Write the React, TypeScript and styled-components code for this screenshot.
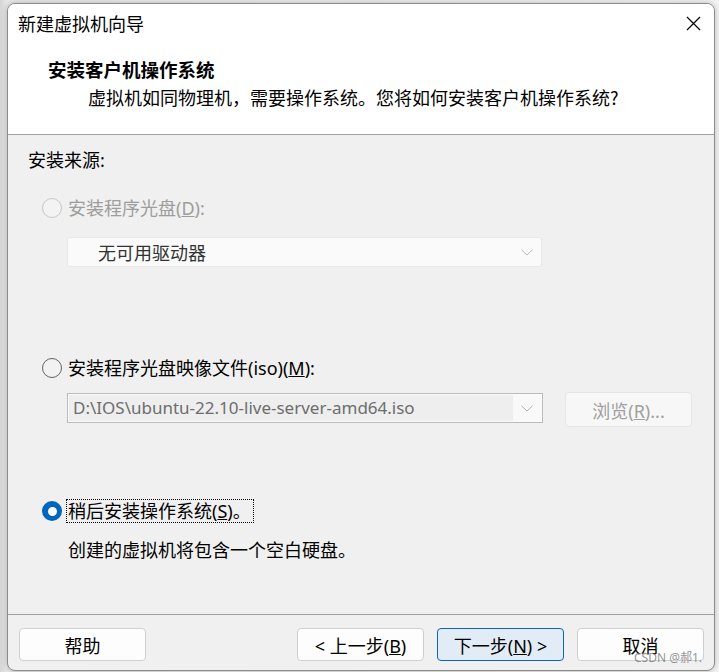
import React from "react";
import styled, { createGlobalStyle, css } from "styled-components";

const Global = createGlobalStyle`
  html, body { margin: 0; padding: 0; }
  body {
    background: #e6e6e6;
    font-family: "Noto Sans", "Noto Sans CJK SC", sans-serif;
    overflow: hidden;
  }
  * { box-sizing: border-box; }
`;

const Page = styled.div`
  width: 719px;
  height: 672px;
  padding: 3px 4px 0 7px;
  background: linear-gradient(90deg, #d4d4d4 0px, #e9e9e9 7px, #f4f4f4 100%);
`;

const Window = styled.div`
  width: 708px;
  height: 668px;
  border: 1px solid #8c8c8c;
  border-radius: 8px;
  overflow: hidden;
  background: #f0f0f0;
  box-shadow: 0 0 6px rgba(0, 0, 0, 0.25);
  display: flex;
  flex-direction: column;
`;

const TitleBar = styled.div`
  height: 38px;
  flex: none;
  background: #ffffff;
  display: flex;
  align-items: center;
  justify-content: space-between;
  padding: 0 13px 0 10px;
`;

const TitleText = styled.span`
  font-family: "Noto Sans CJK SC", sans-serif;
  font-size: 18px;
  line-height: 24px;
  color: #000;
`;

const CloseButton = styled.button`
  width: 16px;
  height: 16px;
  padding: 0;
  border: none;
  background: transparent;
  display: flex;
  align-items: center;
  justify-content: center;
`;

const Header = styled.div`
  height: 93px;
  flex: none;
  background: #ffffff;
  border-bottom: 1px solid #a0a0a0;
  padding: 15px 0 0 40px;
  display: flex;
  flex-direction: column;
  gap: 4px;
`;

const Heading = styled.div`
  font-family: "Noto Sans CJK SC", sans-serif;
  font-weight: 700;
  font-size: 18.5px;
  line-height: 24px;
  color: #000;
`;

const SubHeading = styled.div`
  font-family: "Noto Sans CJK SC", sans-serif;
  font-size: 18px;
  line-height: 24px;
  color: #000;
  padding-left: 40px;
`;

const Content = styled.div`
  height: 480px;
  flex: none;
  border-bottom: 1px solid #a0a0a0;
  padding: 13px 0 0 20px;
  display: flex;
  flex-direction: column;
  align-items: flex-start;
`;

const SectionLabel = styled.div`
  font-size: 18px;
  line-height: 24px;
  color: #000;
`;

const RadioRow = styled.div<{ $mt: number }>`
  display: flex;
  align-items: center;
  height: 24px;
  margin-top: ${(p) => p.$mt}px;
  margin-left: 14px;
  gap: 4px;
`;

type RadioState = "disabled" | "off" | "on";

const RadioCircle = styled.span<{ $state: RadioState }>`
  width: 20px;
  height: 20px;
  border-radius: 50%;
  flex: none;
  display: flex;
  align-items: center;
  justify-content: center;
  ${(p) =>
    p.$state === "disabled"
      ? css`
          border: 1px solid #c6c6c6;
          background: #f3f3f3;
        `
      : p.$state === "off"
      ? css`
          border: 1px solid #616161;
          background: #f2f2f2;
        `
      : css`
          background: #0067c0;
        `}
`;

const RadioDot = styled.span`
  width: 9px;
  height: 9px;
  border-radius: 50%;
  background: #ffffff;
`;

const RadioLabel = styled.span<{ $disabled?: boolean; $focused?: boolean }>`
  font-size: 18px;
  line-height: 22px;
  height: 24px;
  padding: 0 2px 0 1px;
  border: 1px dotted ${(p) => (p.$focused ? "#000" : "transparent")};
  color: ${(p) => (p.$disabled ? "#9d9d9d" : "#000")};
  white-space: nowrap;
`;

const DisabledSelect = styled.div`
  margin: 17px 0 0 39px;
  width: 475px;
  height: 30px;
  background: #fafafa;
  border: 1px solid #e8e8e8;
  border-radius: 2px;
  display: flex;
  align-items: center;
  justify-content: space-between;
  padding: 0 8px 0 30px;
  font-size: 18px;
  color: #333333;
`;

const FileRow = styled.div`
  margin: 12px 0 0 39px;
  display: flex;
  align-items: flex-start;
  gap: 22px;
`;

const Combo = styled.div`
  margin-top: 1px;
  width: 476px;
  height: 30px;
  border: 1px solid #bcbcbc;
  background: #f9f9f9;
  display: flex;
  align-items: stretch;
  padding: 1px;
`;

const ComboText = styled.div`
  flex: 1;
  background: #eeeeee;
  padding-left: 4px;
  font-family: "Noto Sans", sans-serif;
  font-size: 17px;
  line-height: 26px;
  color: #6d6d6d;
  white-space: nowrap;
  overflow: hidden;
`;

const ComboArrow = styled.div`
  width: 28px;
  display: flex;
  align-items: center;
  justify-content: center;
`;

const BrowseButton = styled.button`
  width: 127px;
  height: 35px;
  background: #f7f7f7;
  border: 1px solid #e6e6e6;
  border-radius: 4px;
  font-family: "Noto Sans", "Noto Sans CJK SC", sans-serif;
  font-size: 18px;
  color: #9f9f9f;
  padding: 0;
`;

const Description = styled.div`
  margin: 15px 0 0 40px;
  font-size: 18px;
  line-height: 24px;
  color: #000;
`;

const Footer = styled.div`
  position: relative;
  flex: 1;
  display: flex;
  align-items: flex-start;
  padding: 13px 10px 0 11px;
`;

const Spacer = styled.div`
  flex: 1;
`;

const ButtonGroup = styled.div`
  display: flex;
  gap: 13px;
`;

const DialogButton = styled.button<{ $primary?: boolean }>`
  width: 127px;
  height: 33px;
  border-radius: 4px;
  font-family: "Noto Sans", "Noto Sans CJK SC", sans-serif;
  font-size: 18px;
  color: #000;
  padding: 0;
  background: ${(p) => (p.$primary ? "#e1ecf7" : "#fdfdfd")};
  border: 1px solid ${(p) => (p.$primary ? "#0a66c0" : "#d0d0d0")};
`;

const Watermark = styled.span`
  position: absolute;
  right: 12px;
  bottom: 5px;
  font-family: "Noto Sans", "Noto Sans CJK SC", sans-serif;
  font-size: 12px;
  line-height: 14px;
  color: rgba(110, 110, 110, 0.75);
  pointer-events: none;
`;

const Chevron = ({ color }: { color: string }) => (
  <svg width="12" height="7" viewBox="0 0 12 7">
    <path d="M0.5 0.8 L6 6 L11.5 0.8" fill="none" stroke={color} strokeWidth="1" />
  </svg>
);

export default function App() {
  return (
    <>
      <Global />
      <Page>
        <Window>
          <TitleBar>
            <TitleText>新建虚拟机向导</TitleText>
            <CloseButton aria-label="关闭">
              <svg width="15" height="15" viewBox="0 0 15 15">
                <path d="M1 1 L14 14 M14 1 L1 14" stroke="#000" strokeWidth="1.2" fill="none" />
              </svg>
            </CloseButton>
          </TitleBar>
          <Header>
            <Heading>安装客户机操作系统</Heading>
            <SubHeading>虚拟机如同物理机，需要操作系统。您将如何安装客户机操作系统?</SubHeading>
          </Header>
          <Content>
            <SectionLabel>安装来源:</SectionLabel>
            <RadioRow $mt={24}>
              <RadioCircle $state="disabled" />
              <RadioLabel $disabled>
                安装程序光盘(<u>D</u>):
              </RadioLabel>
            </RadioRow>
            <DisabledSelect>
              <span>无可用驱动器</span>
              <Chevron color="#b8b8b8" />
            </DisabledSelect>
            <RadioRow $mt={89}>
              <RadioCircle $state="off" />
              <RadioLabel>
                安装程序光盘映像文件(iso)(<u>M</u>):
              </RadioLabel>
            </RadioRow>
            <FileRow>
              <Combo>
                <ComboText>D:\IOS\ubuntu-22.10-live-server-amd64.iso</ComboText>
                <ComboArrow>
                  <Chevron color="#b0b0b0" />
                </ComboArrow>
              </Combo>
              <BrowseButton disabled>
                浏览(<u>R</u>)...
              </BrowseButton>
            </FileRow>
            <RadioRow $mt={72}>
              <RadioCircle $state="on">
                <RadioDot />
              </RadioCircle>
              <RadioLabel $focused>
                稍后安装操作系统(<u>S</u>)。
              </RadioLabel>
            </RadioRow>
            <Description>创建的虚拟机将包含一个空白硬盘。</Description>
          </Content>
          <Footer>
            <DialogButton>帮助</DialogButton>
            <Spacer />
            <ButtonGroup>
              <DialogButton>
                &lt; 上一步(<u>B</u>)
              </DialogButton>
              <DialogButton $primary>
                下一步(<u>N</u>) &gt;
              </DialogButton>
              <DialogButton>取消</DialogButton>
            </ButtonGroup>
            <Watermark>CSDN @郝1.</Watermark>
          </Footer>
        </Window>
      </Page>
    </>
  );
}
